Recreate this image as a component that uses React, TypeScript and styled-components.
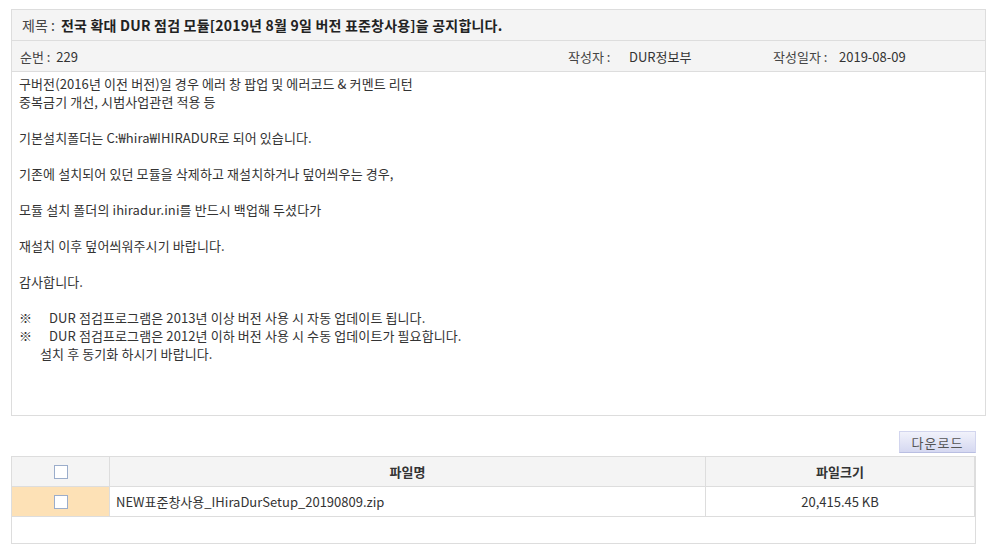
import styled, { createGlobalStyle } from 'styled-components'

const GlobalStyle = createGlobalStyle`
  body {
    margin: 0;
    background: #fff;
    font-family: "Noto Sans CJK KR", "Liberation Sans", sans-serif;
    font-size: 13px;
    color: #333;
  }
  * { box-sizing: border-box; }
`

const Page = styled.div`
  padding: 9px 13px 0 11px;
  width: 999px;
`

const Board = styled.div`
  width: 975px;
  border: 1px solid #ddd;
`

const TitleRow = styled.div`
  display: flex;
  align-items: center;
  height: 31px;
  padding-left: 10px;
  background: #f4f4f4;
  border-bottom: 1px solid #ddd;
  font-size: 14px;
`

const TitleLabel = styled.span`
  width: 39px;
  color: #444;
`

const TitleText = styled.strong`
  font-weight: 700;
  color: #222;
  letter-spacing: 0.2px;
`

const MetaRow = styled.div`
  display: grid;
  grid-template-columns: 548px 205px 1fr;
  align-items: center;
  height: 31px;
  padding-left: 8px;
  background: #f4f4f4;
  border-bottom: 1px solid #ddd;
`

const MetaItem = styled.div`
  display: flex;
  align-items: center;
`

const MetaLabel = styled.span<{ $w?: number }>`
  width: ${p => (p.$w ? `${p.$w}px` : 'auto')};
  color: #444;
`

const Content = styled.div`
  height: 343px;
  padding: 3px 7px;
  line-height: 18px;
  letter-spacing: 0.1px;
  color: #333;
`

const Line = styled.p<{ $indent?: number }>`
  margin: 0;
  min-height: 18px;
  padding-left: ${p => p.$indent ?? 0}px;
`

const Note = styled.p`
  display: flex;
  margin: 0;
`

const NoteMark = styled.span`
  width: 30px;
`

const Actions = styled.div`
  display: flex;
  justify-content: flex-end;
  width: 965px;
  margin: 15px 0 3px;
`

const DownloadButton = styled.button`
  width: 77px;
  height: 22px;
  padding: 0;
  border: 1px solid #d2d5ee;
  border-bottom-color: #b9bee2;
  background: linear-gradient(#f1f2fb, #d5d8f1);
  font-family: inherit;
  font-size: 13px;
  color: #555;
  letter-spacing: 1px;
`

const FileTable = styled.div`
  width: 965px;
  height: 88px;
  border: 1px solid #ddd;
`

const FileRow = styled.div`
  display: grid;
  grid-template-columns: 98px 596px 269px;
  height: 30px;
  border-bottom: 1px solid #ddd;
`

const Cell = styled.div<{ $head?: boolean; $align?: 'left' | 'center'; $tint?: string }>`
  display: flex;
  align-items: center;
  justify-content: ${p => (p.$align === 'left' ? 'flex-start' : 'center')};
  padding-left: ${p => (p.$align === 'left' ? '6px' : '0')};
  border-right: 1px solid #ddd;
  background: ${p => p.$tint ?? (p.$head ? '#f4f4f4' : '#fff')};
  font-weight: ${p => (p.$head ? 700 : 400)};
  color: #333;
`

const Check = styled.span`
  display: inline-block;
  width: 14px;
  height: 14px;
  margin-left: 1px;
  border: 1px solid #9badcb;
  background: #fff;
`

export default function App() {
  return (
    <>
      <GlobalStyle />
      <Page>
        <Board>
          <TitleRow>
            <TitleLabel>제목 :</TitleLabel>
            <TitleText>전국 확대 DUR 점검 모듈[2019년 8월 9일 버전 표준창사용]을 공지합니다.</TitleText>
          </TitleRow>
          <MetaRow>
            <MetaItem>
              <MetaLabel>순번 :&nbsp;&nbsp;</MetaLabel>
              <span>229</span>
            </MetaItem>
            <MetaItem>
              <MetaLabel $w={61}>작성자 :</MetaLabel>
              <span>DUR정보부</span>
            </MetaItem>
            <MetaItem>
              <MetaLabel $w={66}>작성일자 :</MetaLabel>
              <span>2019-08-09</span>
            </MetaItem>
          </MetaRow>
          <Content>
            <Line>구버전(2016년 이전 버전)일 경우 에러 창 팝업 및 에러코드 &amp; 커멘트 리턴</Line>
            <Line>중복금기 개선, 시범사업관련 적용 등</Line>
            <Line />
            <Line>기본설치폴더는 C:₩hira₩IHIRADUR로 되어 있습니다.</Line>
            <Line />
            <Line>기존에 설치되어 있던 모듈을 삭제하고 재설치하거나 덮어씌우는 경우,</Line>
            <Line />
            <Line>모듈 설치 폴더의 ihiradur.ini를 반드시 백업해 두셨다가</Line>
            <Line />
            <Line>재설치 이후 덮어씌워주시기 바랍니다.</Line>
            <Line />
            <Line>감사합니다.</Line>
            <Line />
            <Note>
              <NoteMark>※</NoteMark>
              <span>DUR 점검프로그램은 2013년 이상 버전 사용 시 자동 업데이트 됩니다.</span>
            </Note>
            <Note>
              <NoteMark>※</NoteMark>
              <span>DUR 점검프로그램은 2012년 이하 버전 사용 시 수동 업데이트가 필요합니다.</span>
            </Note>
            <Line $indent={21}>설치 후 동기화 하시기 바랍니다.</Line>
          </Content>
        </Board>

        <Actions>
          <DownloadButton type="button">다운로드</DownloadButton>
        </Actions>

        <FileTable>
          <FileRow>
            <Cell $head>
              <Check />
            </Cell>
            <Cell $head>파일명</Cell>
            <Cell $head>파일크기</Cell>
          </FileRow>
          <FileRow>
            <Cell $tint="#fde1b6">
              <Check />
            </Cell>
            <Cell $align="left">NEW표준창사용_IHiraDurSetup_20190809.zip</Cell>
            <Cell>20,415.45 KB</Cell>
          </FileRow>
        </FileTable>
      </Page>
    </>
  )
}
